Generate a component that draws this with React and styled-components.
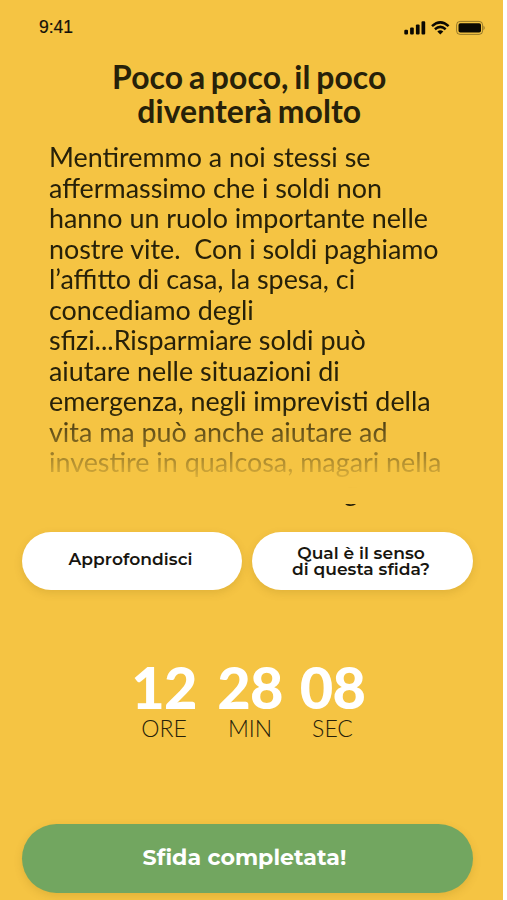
import React from "react";
import styled, { createGlobalStyle } from "styled-components";

const GlobalStyle = createGlobalStyle`
  * { box-sizing: border-box; }
  body { margin: 0; background: #fff; }
`;

const Screen = styled.main`
  width: 502.5px;
  height: 900px;
  overflow: hidden;
  background: #f5c443;
  color: #272109;
  font-family: Lato, "Open Sans", sans-serif;
  display: flex;
  flex-direction: column;
`;

const StatusBar = styled.header`
  flex: none;
  height: 54px;
  padding: 0 17px 0 39px;
  display: flex;
  justify-content: space-between;
  align-items: center;
  color: #14110a;
  font: 400 17.5px "Liberation Sans", sans-serif;
  -webkit-text-stroke: 0.2px #14110a;
`;

const StatusIcons = styled.svg`
  width: 83px;
  height: 16px;
  margin-top: 2px;
`;

const Title = styled.h1`
  flex: none;
  margin: 6px 0 0;
  height: 70px;
  padding-right: 4px;
  text-align: center;
  font-size: 31.9px;
  line-height: 34px;
  font-weight: 700;
  letter-spacing: 0.08px;
  word-spacing: -2.1px;
  white-space: pre;
`;

const Article = styled.section`
  flex: none;
  margin: 11px 0 0 49px;
  padding-top: 1px;
  height: 368px;
  overflow: hidden;
  font-size: 26.88px;
  line-height: 30.55px;
  white-space: pre;
  mask-image: linear-gradient(#000 266px, transparent 347px, transparent 363px, #000 363px);
`;

const Line = styled.span`
  display: block;
  width: max-content;
`;

const TailLine = styled(Line)`
  margin-top: -2px;
  padding-left: 295px;
`;

const Actions = styled.div`
  flex: none;
  display: flex;
  gap: 10px;
  margin: 23px 0 0 22px;
`;

const Pill = styled.button`
  width: ${(p) => p.$width}px;
  height: 58px;
  padding: ${(p) => p.$padding};
  border: 0;
  border-radius: 29px;
  background: #fff;
  color: #17150f;
  box-shadow: 0 3px 8px rgba(120, 85, 0, 0.16);
  font: 600 17.1px/16px Montserrat, Inter, sans-serif;
  letter-spacing: 0.04px;
`;

const Countdown = styled.div`
  flex: none;
  display: flex;
  margin: 69px 0 0 121px;
`;

const Unit = styled.div`
  width: ${(p) => p.$width}px;
  text-align: center;
`;

const Value = styled.div`
  font-size: 57.7px;
  line-height: 55px;
  font-weight: 900;
  letter-spacing: -0.7px;
  color: #fff;
`;

const Label = styled.div`
  font-size: 23px;
  line-height: 29px;
  font-weight: 300;
`;

const Complete = styled.button`
  flex: none;
  width: 451px;
  height: 69px;
  margin: 81px 0 0 22px;
  padding: 0 6px 2px 0;
  border: 0;
  border-radius: 35px;
  background: #72a660;
  color: #fff;
  box-shadow: 0 3px 8px rgba(120, 85, 0, 0.16);
  font: 700 22.1px Montserrat, Inter, sans-serif;
  letter-spacing: 0.05px;
`;

const lines = [
  "Mentiremmo a noi stessi se",
  "affermassimo che i soldi non",
  "hanno un ruolo importante nelle",
  "nostre vite.  Con i soldi paghiamo",
  "l’affitto di casa, la spesa, ci",
  "concediamo degli",
  "sfizi...Risparmiare soldi può",
  "aiutare nelle situazioni di",
  "emergenza, negli imprevisti della",
  "vita ma può anche aiutare ad",
  "investire in qualcosa, magari nella",
];

const units = [
  { value: "12", label: "ORE", width: 86 },
  { value: "28", label: "MIN", width: 86 },
  { value: "08", label: "SEC", width: 79 },
];

export default function App() {
  return (
    <Screen>
      <GlobalStyle />
      <StatusBar>
        <span>9:41</span>
        <StatusIcons viewBox="0 0 83 16">
          <g fill="#0b0903">
            <rect x="1.3" y="9.8" width="3.7" height="4.7" rx="1.1" />
            <rect x="7.1" y="7.4" width="3.7" height="7.1" rx="1.1" />
            <rect x="12.9" y="4.5" width="3.7" height="10" rx="1.1" />
            <rect x="18.5" y="1.3" width="3.7" height="13.2" rx="1.1" />
            <path d="M34.3 11.4Q37.3 9.2 40.3 11.4L37.3 14.4Z" />
            <rect x="55.5" y="3.3" width="22.5" height="9.2" rx="1.8" />
            <path d="M80.5 5.5Q83 7.9 80.5 10.3Z" opacity=".4" />
          </g>
          <g fill="none" stroke="#0b0903" strokeWidth="2.5">
            <path d="M29 6.2Q37.3-1.5 45.6 6.2M31.9 9.2Q37.3 4.6 42.7 9.2" />
            <rect x="53.6" y="1.4" width="26" height="13" rx="3.5" strokeWidth="1" opacity=".4" />
          </g>
        </StatusIcons>
      </StatusBar>
      <Title>{"Poco a poco, il poco\ndiventerà molto"}</Title>
      <Article>
        {lines.map((l) => <Line key={l}>{l}</Line>)}
        <TailLine>g</TailLine>
      </Article>
      <Actions>
        <Pill $width={220} $padding="0 3px 4px 0">Approfondisci</Pill>
        <Pill $width={221} $padding="0 3px 0 0">Qual è il senso<br />di questa sfida?</Pill>
      </Actions>
      <Countdown>
        {units.map((u) => (
          <Unit key={u.label} $width={u.width}>
            <Value>{u.value}</Value>
            <Label>{u.label}</Label>
          </Unit>
        ))}
      </Countdown>
      <Complete>Sfida completata!</Complete>
    </Screen>
  );
}
